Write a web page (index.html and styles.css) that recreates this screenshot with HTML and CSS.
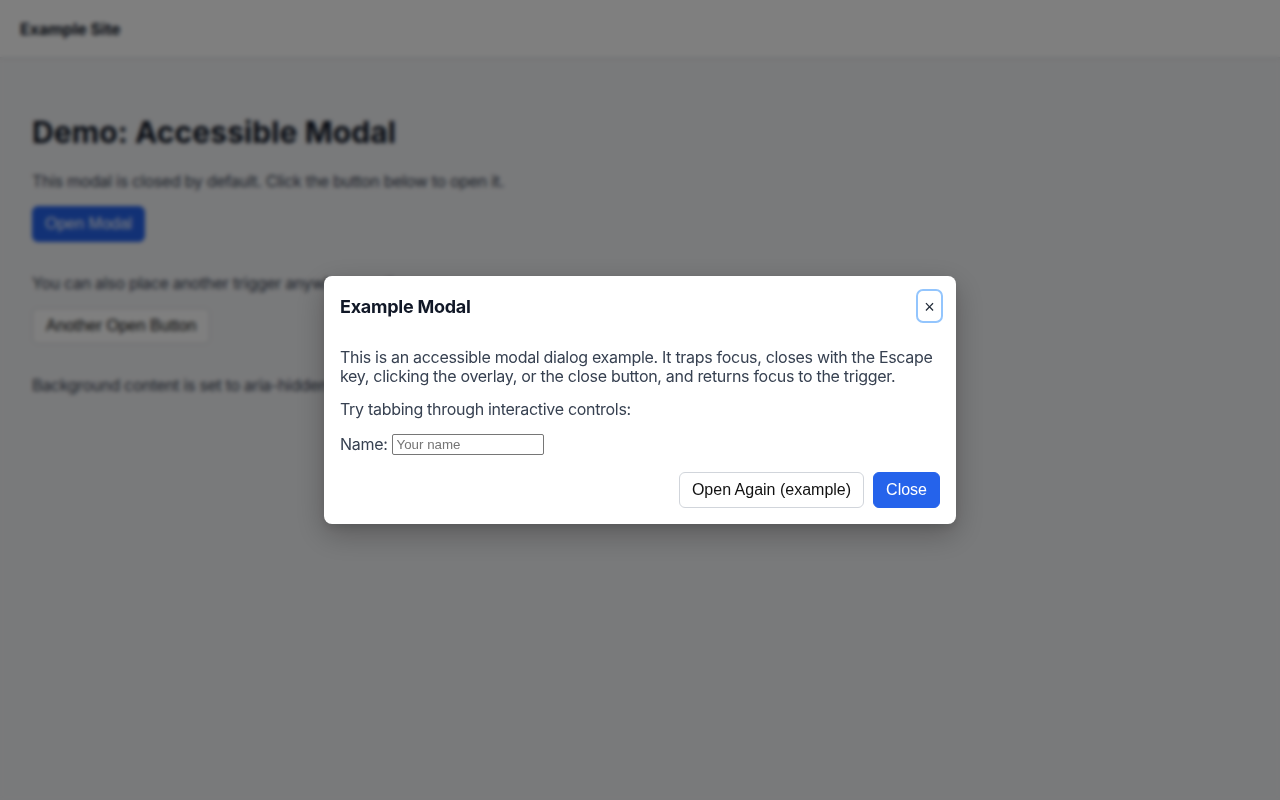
FILE: index.html
```html
<!DOCTYPE html>
<html lang="en">
<head>
<meta charset="utf-8">
<title>Accessible Modal Demo</title>
<link rel="stylesheet" href="styles.css">
</head>
<body>
<div class="page" aria-hidden="true">
  <header class="site-header">
    <span class="brand">Example Site</span>
  </header>
  <main class="main">
    <h1 class="title">Demo: Accessible Modal</h1>
    <p class="text">This modal is closed by default. Click the button below to open it.</p>
    <div class="row">
      <button class="btn btn-primary" type="button">Open Modal</button>
    </div>
    <p class="text">You can also place another trigger anywhere on the page:</p>
    <div class="row">
      <button class="btn btn-secondary btn-wide" type="button">Another Open Button</button>
    </div>
    <p class="text">Background content is set to aria-hidden while the modal is open.</p>
  </main>
</div>

<div class="overlay">
  <div class="modal" role="dialog" aria-modal="true" aria-labelledby="modal-title">
    <div class="modal-header">
      <h2 class="modal-title" id="modal-title">Example Modal</h2>
      <button class="modal-close" type="button" aria-label="Close">×</button>
    </div>
    <div class="modal-body">
      <p class="modal-text">This is an accessible modal dialog example. It traps focus, closes with the Escape key, clicking the overlay, or the close button, and returns focus to the trigger.</p>
      <p class="modal-text">Try tabbing through interactive controls:</p>
      <div class="field">
        <label class="field-label" for="name">Name:</label>
        <input class="field-input" id="name" type="text" placeholder="Your name">
      </div>
    </div>
    <div class="modal-footer">
      <button class="btn btn-secondary" type="button">Open Again (example)</button>
      <button class="btn btn-primary" type="button">Close</button>
    </div>
  </div>
</div>
</body>
</html>
```

FILE: styles.css
```css
* { box-sizing: border-box; }

html, body {
  margin: 0;
  padding: 0;
  height: 100%;
}

body {
  font-family: Inter, "Noto Sans", sans-serif;
  background: #f3f4f6;
  color: #111827;
}

.page {
  min-height: 100%;
}

.site-header {
  height: 58px;
  background: #ffffff;
  border-bottom: 1px solid #e5e7eb;
  box-shadow: 0 1px 3px rgba(0, 0, 0, 0.06);
  display: flex;
  align-items: center;
  padding: 0 20px;
}

.brand {
  font-weight: 700;
  font-size: 16px;
  color: #111827;
}

.main {
  padding: 57px 32px 32px;
}

.title {
  margin: 0 0 20px;
  font-size: 30px;
  line-height: 34px;
  font-weight: 700;
  letter-spacing: 0.1px;
  color: #111827;
}

.text {
  margin: 0;
  font-size: 16px;
  line-height: 24px;
  letter-spacing: -0.3px;
  color: #374151;
}

.row {
  margin: 13px 0 29px;
}

.btn {
  font-family: "Liberation Sans", Arial, sans-serif;
  font-size: 16px;
  height: 36px;
  padding: 0 12px;
  border-radius: 6px;
  border: 1px solid transparent;
  cursor: pointer;
}

.btn-wide {
  padding: 0 13px;
}

.btn-primary {
  background: #2563eb;
  border-color: #2563eb;
  color: #ffffff;
}

.btn-secondary {
  background: #ffffff;
  border-color: #d1d5db;
  color: #111111;
}

.overlay {
  position: fixed;
  inset: 0;
  background: rgba(0, 0, 0, 0.5);
  backdrop-filter: blur(2px);
  display: flex;
  align-items: center;
  justify-content: center;
}

.modal {
  width: 632px;
  background: #ffffff;
  border-radius: 8px;
  box-shadow: 0 10px 30px rgba(0, 0, 0, 0.25), 0 4px 10px rgba(0, 0, 0, 0.1);
}

.modal-header {
  display: flex;
  align-items: center;
  justify-content: space-between;
  padding: 13px 13px 0 16px;
}

.modal-title {
  margin: 0;
  font-size: 18px;
  font-weight: 700;
  letter-spacing: -0.25px;
  color: #111827;
}

.modal-close {
  width: 27px;
  height: 34px;
  padding: 2px 0 0;
  background: #ffffff;
  border: 2px solid #93c5fd;
  border-radius: 7px;
  font-family: "Liberation Sans", Arial, sans-serif;
  font-size: 18px;
  line-height: 1;
  color: #1f2937;
  cursor: pointer;
}

.modal-body {
  padding: 25px 16px 0;
}

.modal-text {
  margin: 0 0 15px;
  font-size: 16px;
  line-height: 18.5px;
  letter-spacing: -0.3px;
  color: #374151;
}

.field {
  display: flex;
  align-items: center;
  gap: 4px;
  height: 21px;
}

.field-label {
  font-size: 16px;
  letter-spacing: -0.3px;
  color: #374151;
}

.field-input {
  width: 152px;
  height: 21px;
  font-family: "Liberation Sans", Arial, sans-serif;
  font-size: 13.33px;
  padding: 1px 4px;
  border: 1px solid #767676;
  border-radius: 2px;
  color: #111111;
}

.field-input::placeholder {
  color: #757575;
}

.modal-footer {
  display: flex;
  justify-content: flex-end;
  gap: 9px;
  padding: 17px 16px 16px;
}
```
